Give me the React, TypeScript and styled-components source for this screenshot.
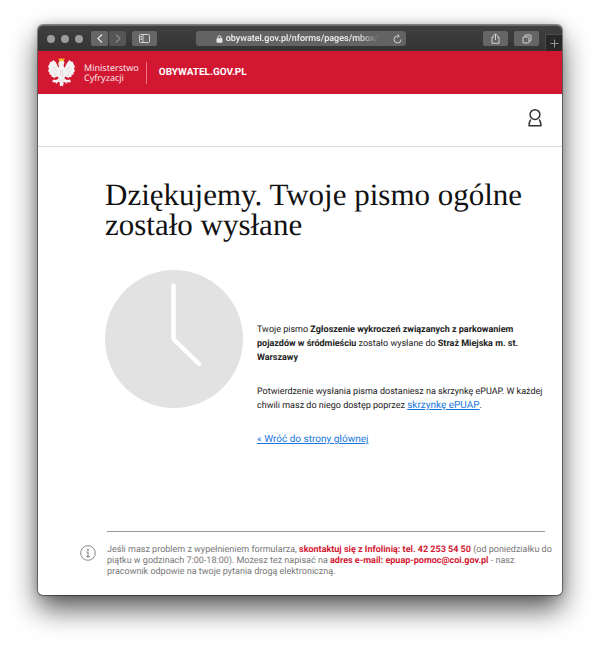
import React from "react";
import styled, { createGlobalStyle } from "styled-components";

const Global = createGlobalStyle`
  * { box-sizing: border-box; }
  body {
    margin: 0;
    background: #fff;
    color: #222;
    font-family: Roboto, "Liberation Sans", sans-serif;
    text-rendering: geometricPrecision;
  }
  h1, p { margin: 0; }
`;

const Desktop = styled.div`
  padding: 25px 38px 50px;
  overflow: hidden;
`;

const Window = styled.div`
  border-radius: 5px;
  background: #fff;
  box-shadow: 0 0 0 1px rgba(0, 0, 0, 0.4), 0 14px 28px rgba(0, 0, 0, 0.66), 0 0 10px rgba(0, 0, 0, 0.2);
`;

const Toolbar = styled.div`
  display: flex;
  align-items: center;
  height: 26px;
  padding-left: 9px;
  border-radius: 5px 5px 0 0;
  border-top: 1px solid #6a6a6a;
  background: linear-gradient(#404040, #333);
`;

const Lights = styled.div`
  display: flex;
  gap: 6px;
  margin-right: 8px;
`;

const Light = styled.span`
  width: 8px;
  height: 8px;
  border-radius: 50%;
  background: #9c9c9c;
`;

const ToolButton = styled.button<{ $dim?: boolean; $width?: number }>`
  display: flex;
  align-items: center;
  justify-content: center;
  width: ${(p) => p.$width ?? 25}px;
  height: 15px;
  padding: 0;
  border: 0;
  border-radius: 2px;
  background: ${(p) => (p.$dim ? "#555" : "#666")};
  color: ${(p) => (p.$dim ? "#8b8b8b" : "#dcdcdc")};
`;

const ButtonGroup = styled.div<{ $gap: number }>`
  display: flex;
  gap: ${(p) => p.$gap}px;
  margin-right: 6px;
`;

const Spacer = styled.div<{ $grow: number }>`
  flex: ${(p) => p.$grow};
`;

const AddressBar = styled.div`
  display: flex;
  align-items: center;
  width: 210px;
  height: 15px;
  padding: 0 4px 0 20px;
  border-radius: 3px;
  background: #636363;
  color: #e6e6e6;
`;

const Address = styled.input`
  flex: 1;
  min-width: 0;
  height: 15px;
  margin: 0 13px 0 3px;
  padding: 0;
  border: 0;
  outline: 0;
  background: transparent;
  color: #f2f2f2;
  font: 500 9px Roboto, sans-serif;
  text-rendering: geometricPrecision;
  mask-image: linear-gradient(to right, #000 85%, transparent);
`;

const Reload = styled.button`
  display: flex;
  padding: 0;
  border: 0;
  background: none;
  color: #d0d0d0;
`;

const NewTab = styled.button`
  display: flex;
  align-items: center;
  justify-content: center;
  align-self: flex-end;
  width: 17px;
  height: 17px;
  padding: 0;
  border: 1px solid #4a4a4a;
  border-width: 1px 0 0 1px;
  background: #272727;
  color: #999;
`;

const Brand = styled.header`
  display: flex;
  align-items: center;
  height: 43px;
  padding-left: 10px;
  background: #d21731;
  color: #fff;
`;

const Ministry = styled.div`
  margin-left: 9px;
  padding-right: 7px;
  color: #fbe4e8;
  font: 9px/10px "Noto Sans", sans-serif;
`;

const Divider = styled.span`
  width: 1px;
  height: 22px;
  margin-right: 12px;
  background: #e97583;
`;

const SiteName = styled.a`
  color: #fff;
  font-size: 10px;
  font-weight: 700;
  text-decoration: none;
`;

const UserBar = styled.div`
  display: flex;
  align-items: center;
  justify-content: flex-end;
  height: 53px;
  padding-right: 19px;
  padding-bottom: 5px;
  border-bottom: 1px solid #dadada;
`;

const UserButton = styled.button`
  display: flex;
  padding: 0;
  border: 0;
  background: none;
  color: #333;
`;

const Main = styled.main`
  padding: 33px 16px 0 67px;
`;

const Title = styled.h1`
  color: #111;
  font: 400 31px/30px "Liberation Serif", serif;
`;

const Result = styled.section`
  display: flex;
  gap: 14px;
  margin-top: 30px;
`;

const ClockIcon = styled.svg`
  flex: none;
  width: 138px;
  height: 138px;
`;

const Message = styled.div`
  padding-top: 53px;
  font-size: 9px;
  line-height: 14px;
`;

const Paragraph = styled.p`
  margin-bottom: 20px;
`;

const TextLink = styled.a`
  color: #1976dc;
  font-size: 10px;
`;

const Footer = styled.footer`
  margin-top: 84px;
  padding: 0 8px 17px 42px;
`;

const Rule = styled.hr`
  height: 1px;
  margin: 0 9px 13px 27px;
  border: 0;
  background: #999;
`;

const HelpRow = styled.div`
  display: flex;
  gap: 11px;
`;

const InfoIcon = styled.svg`
  flex: none;
  width: 16px;
  height: 16px;
`;

const Help = styled.p`
  flex: 1;
  color: #777;
  font-size: 9px;
  line-height: 11px;
`;

const HelpLink = styled.a`
  color: #d21731;
  font-weight: 700;
  text-decoration: none;
`;

function Eagle() {
  return (
    <svg width="27" height="29" viewBox="0 0 54 58" role="img" aria-label="Godło">
      <path
        fill="#f4f2f3"
        d="M22 16 20 11 23 6 30 5 33 9 31 15 33 20 38 10 43 4 46 7 50 8 51 12 54 17 52 21 54 26 51 29 51 33 47 34 47 38 43 38 41 40 37 38 34 37 33 41 38 44 44 43 46 48 41 49 37 48 38 52 34 49 31 47 31 53 29 57 27 55 24 57 23 48 20 48 16 52 16 49 12 49 8 47 11 43 16 44 21 41 20 37 16 38 12 40 10 38 7 38 7 34 3 33 3 29 0 26 2 21 0 17 3 12 4 8 8 7 11 4 16 9 21 20Z"
      />
      <path d="M11 17 17 27M7 23 14 31M43 17 37 27M47 23 40 31M25 23V37M29 23V37M12 35 17 32M37 32 42 35M21 43 27 45 33 43" fill="none" stroke="#d9c6cb" strokeWidth="1.2" />
      <path d="M22 6 21 0 24 2 27 0 30 2 33 0 32 6Z" fill="#f0bd2d" />
      <path d="M20 10 23 10 22 13Z" fill="#dda432" />
    </svg>
  );
}

export default function App() {
  return (
    <>
      <Global />
      <Desktop>
        <Window>
          <Toolbar>
            <Lights><Light /><Light /><Light /></Lights>
            <ButtonGroup $gap={1}>
              <ToolButton $width={17} aria-label="Wstecz">
                <svg width="6" height="9" viewBox="0 0 6 9" fill="none" stroke="currentColor" strokeWidth="1.4"><path d="M5 .5 1 4.5 5 8.5" /></svg>
              </ToolButton>
              <ToolButton $width={17} $dim aria-label="Dalej">
                <svg width="6" height="9" viewBox="0 0 6 9" fill="none" stroke="currentColor" strokeWidth="1.2"><path d="M1 .5 5 4.5 1 8.5" /></svg>
              </ToolButton>
            </ButtonGroup>
            <ToolButton aria-label="Pasek boczny">
              <svg width="11" height="9" viewBox="0 0 11 9" fill="none" stroke="currentColor" strokeWidth=".9"><rect x=".5" y=".5" width="10" height="8" rx="1" /><path d="M4 .5v8M1.5 2.5h1.5M1.5 4h1.5M1.5 5.5h1.5" /></svg>
            </ToolButton>
            <Spacer $grow={1} />
            <AddressBar>
              <svg width="7" height="8" viewBox="0 0 7 8"><rect x=".5" y="3.3" width="6" height="4.5" rx=".7" fill="currentColor" /><path d="M2 4V2.2a1.5 1.5 0 0 1 3 0V4" fill="none" stroke="currentColor" /></svg>
              <Address aria-label="Adres" readOnly value="obywatel.gov.pl/nforms/pages/mbox/sendConfirm" />
              <Reload aria-label="Odśwież">
                <svg width="9" height="10" viewBox="0 0 9 10" fill="none" stroke="currentColor"><path d="M8 5.5A3.5 3.5 0 1 1 4.5 2H6M4.5.3 6.3 2 4.5 3.8" /></svg>
              </Reload>
            </AddressBar>
            <Spacer $grow={2} />
            <ButtonGroup $gap={6}>
              <ToolButton aria-label="Udostępnij">
                <svg width="9" height="11" viewBox="0 0 9 11" fill="none" stroke="currentColor" strokeWidth=".9"><path d="M3 4H1v6.3h7V4H6M4.5 7V1M2.5 2.8l2-2 2 2" /></svg>
              </ToolButton>
              <ToolButton aria-label="Karty">
                <svg width="10" height="10" viewBox="0 0 10 10" fill="none" stroke="currentColor" strokeWidth=".9"><rect x="1" y="3" width="6" height="6" rx=".7" /><path d="M3 3V1.6q0-.6.6-.6h4.8q.6 0 .6.6v4.8q0 .6-.6.6H7" /></svg>
              </ToolButton>
            </ButtonGroup>
            <NewTab aria-label="Nowa karta">
              <svg width="9" height="9" viewBox="0 0 9 9" stroke="currentColor"><path d="M4.5 .5v8M.5 4.5h8" /></svg>
            </NewTab>
          </Toolbar>
          <Brand>
            <Eagle />
            <Ministry>Ministerstwo<br />Cyfryzacji</Ministry>
            <Divider />
            <SiteName href="#">OBYWATEL.GOV.PL</SiteName>
          </Brand>
          <UserBar>
            <UserButton aria-label="Konto">
              <svg width="16" height="20" viewBox="0 0 16 20" fill="none" stroke="currentColor" strokeWidth="1.5" strokeLinejoin="round"><circle cx="8" cy="6.6" r="4.9" /><path d="M3.8 11.5Q2.3 13.2 2 17.7H14Q13.7 13.2 12.2 11.5" /></svg>
            </UserButton>
          </UserBar>
          <Main>
            <Title>Dziękujemy. Twoje pismo ogólne zostało wysłane</Title>
            <Result>
              <ClockIcon viewBox="0 0 138 138" aria-hidden="true">
                <circle cx="69" cy="69" r="69" fill="#e2e2e2" />
                <path d="M68.5 15.5V69L94 94" fill="none" stroke="#fff" strokeWidth="4.5" strokeLinecap="round" strokeLinejoin="round" />
              </ClockIcon>
              <Message>
                <Paragraph>Twoje pismo <b>Zgłoszenie wykroczeń związanych z parkowaniem<br />pojazdów w śródmieściu</b> zostało wysłane do <b>Straż Miejska m. st.<br />Warszawy</b></Paragraph>
                <Paragraph>Potwierdzenie wysłania pisma dostaniesz na skrzynkę ePUAP. W każdej<br />chwili masz do niego dostęp poprzez <TextLink href="#">skrzynkę ePUAP</TextLink>.</Paragraph>
                <TextLink href="#">« Wróć do strony głównej</TextLink>
              </Message>
            </Result>
          </Main>
          <Footer>
            <Rule />
            <HelpRow>
              <InfoIcon viewBox="0 0 16 16" aria-hidden="true">
                <circle cx="8" cy="8" r="7.3" fill="none" stroke="#8a8a8a" />
                <circle cx="8" cy="4.8" r="1" fill="#858585" />
                <path d="M6.3 7H8V11.5M6.2 11.6H9.9" fill="none" stroke="#858585" strokeWidth="1.1" />
              </InfoIcon>
              <Help>
                Jeśli masz problem z wypełnieniem formularza, <HelpLink href="tel:422535450">skontaktuj się z Infolinią: tel. 42 253 54 50</HelpLink> (od poniedziałku do piątku w godzinach 7:00-18:00). Możesz też napisać na <HelpLink href="mailto:epuap-pomoc@coi.gov.pl">adres e-mail: epuap-pomoc@coi.gov.pl</HelpLink> - nasz pracownik odpowie na twoje pytania drogą elektroniczną.
              </Help>
            </HelpRow>
          </Footer>
        </Window>
      </Desktop>
    </>
  );
}
